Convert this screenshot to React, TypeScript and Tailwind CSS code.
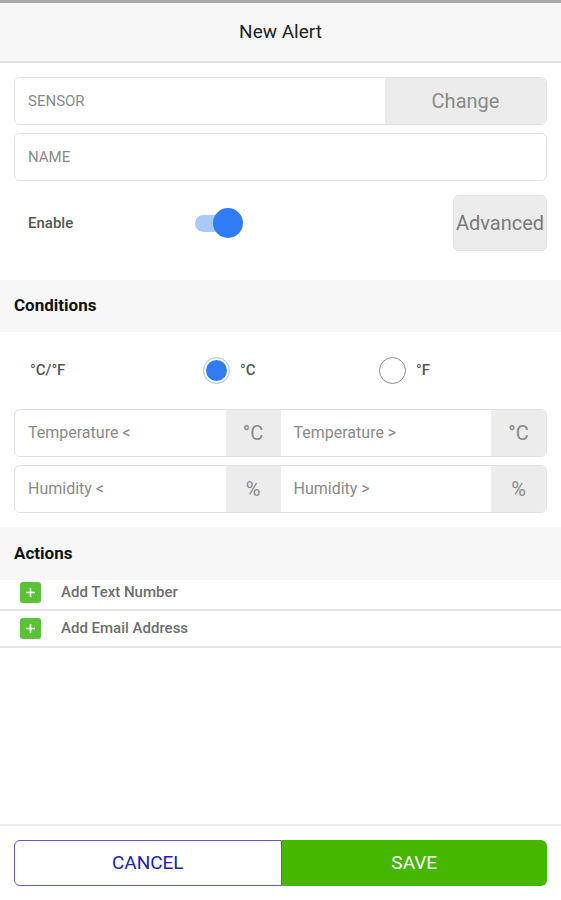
import React from "react";

function Field({ placeholder, unit }: { placeholder: string; unit: string }) {
  return (
    <div className="flex flex-1 h-[46px] items-stretch">
      <div className="flex flex-1 items-center pl-[13px] text-[16px] text-[#8a8a8a]">
        {placeholder}
      </div>
      <div className="flex w-[55px] items-center justify-center bg-[#ececec] text-[20px] text-[#8a8a8a]">
        {unit}
      </div>
    </div>
  );
}

function PlusBox() {
  return (
    <div className="flex w-[21px] h-[21px] items-center justify-center rounded-[3px] bg-[#5bc236]">
      <svg width="11" height="11" viewBox="0 0 11 11">
        <path d="M5.5 1v9M1 5.5h9" stroke="white" strokeWidth="1.6" />
      </svg>
    </div>
  );
}

export default function App() {
  return (
    <div
      className="flex flex-col h-[900px] w-full bg-white"
      style={{ fontFamily: "Roboto, 'Liberation Sans', sans-serif" }}
    >
      <div className="h-[3px] bg-[#a9a9a9]" />
      <div className="flex h-[60px] items-center justify-center bg-[#f7f7f7] border-b-2 border-[#e0e0e0] text-[19px] text-[#222]">
        New Alert
      </div>

      <div className="flex flex-col gap-2 px-[14px] pt-[14px]">
        <div className="flex h-12 overflow-hidden rounded-md border border-[#e2e2e2]">
          <div className="flex flex-1 items-center pl-[13px] text-[15px] text-[#8a8a8a]">
            SENSOR
          </div>
          <div className="flex w-[161px] items-center justify-center bg-[#ececec] text-[20px] text-[#8a8a8a]">
            Change
          </div>
        </div>
        <div className="flex h-12 items-center rounded-md border border-[#e2e2e2] pl-[13px] text-[15px] text-[#8a8a8a]">
          NAME
        </div>
      </div>

      <div className="flex items-center px-[14px] mt-[14px]">
        <div className="w-[181px] pl-[14px] text-[15px] font-medium text-[#555]">Enable</div>
        <div className="relative w-[48px] h-[30px]">
          <div className="absolute left-0 top-[7px] w-[36px] h-[17px] rounded-full bg-[#a9c9f8]" />
          <div className="absolute left-[18px] top-0 w-[30px] h-[30px] rounded-full bg-[#2f7bf4]" />
        </div>
        <div className="flex-1" />
        <div className="flex w-[94px] h-[56px] items-center justify-center rounded-md bg-[#ececec] border border-[#e4e4e4] text-[20px] text-[#7a7a7a]">
          Advanced
        </div>
      </div>

      <div className="flex h-[52px] items-center mt-[29px] bg-[#f7f7f7] px-[14px] text-[17px] font-bold text-[#111]">
        Conditions
      </div>

      <div className="flex h-[77px] items-center px-[14px]">
        <div className="w-[189px] pl-[16px] text-[15px] font-medium text-[#555]">°C/°F</div>
        <div className="flex w-[176px] items-center gap-[10px]">
          <div className="flex w-[27px] h-[27px] items-center justify-center rounded-full border-[1.5px] border-[#9dbdf7]">
            <div className="w-[21px] h-[21px] rounded-full bg-[#2f7bf4]" />
          </div>
          <span className="text-[15px] font-medium text-[#555]">°C</span>
        </div>
        <div className="flex items-center gap-[10px]">
          <div className="w-[27px] h-[27px] rounded-full border-[1.5px] border-[#8a8a8a]" />
          <span className="text-[15px] font-medium text-[#555]">°F</span>
        </div>
      </div>

      <div className="flex flex-col gap-2 px-[14px]">
        <div className="flex overflow-hidden rounded-md border border-[#e2e2e2]">
          <Field placeholder="Temperature <" unit="°C" />
          <Field placeholder="Temperature >" unit="°C" />
        </div>
        <div className="flex overflow-hidden rounded-md border border-[#e2e2e2]">
          <Field placeholder="Humidity <" unit="%" />
          <Field placeholder="Humidity >" unit="%" />
        </div>
      </div>

      <div className="flex h-[53px] items-center mt-[14px] bg-[#f7f7f7] px-[14px] text-[17px] font-bold text-[#111]">
        Actions
      </div>

      <div className="flex h-[31px] items-center gap-[20px] pl-[20px] pb-[5px] border-b-2 border-[#e6e6e6]">
        <PlusBox />
        <span className="text-[15px] font-medium text-[#6e6e6e]">Add Text Number</span>
      </div>
      <div className="flex h-[37px] items-center gap-[20px] pl-[20px] border-b-2 border-[#e6e6e6]">
        <PlusBox />
        <span className="text-[15px] font-medium text-[#6e6e6e]">Add Email Address</span>
      </div>

      <div className="flex-1" />

      <div className="border-t-2 border-[#eeeeee] px-[14px] pt-[14px] pb-[14px]">
        <div className="flex h-[46px]">
          <div className="flex flex-1 items-center justify-center rounded-l-md border border-[#5a5ad6] text-[19px] text-[#2121b8]">
            CANCEL
          </div>
          <div className="flex flex-1 items-center justify-center rounded-r-md bg-[#45b700] text-[19px] text-white">
            SAVE
          </div>
        </div>
      </div>
    </div>
  );
}
